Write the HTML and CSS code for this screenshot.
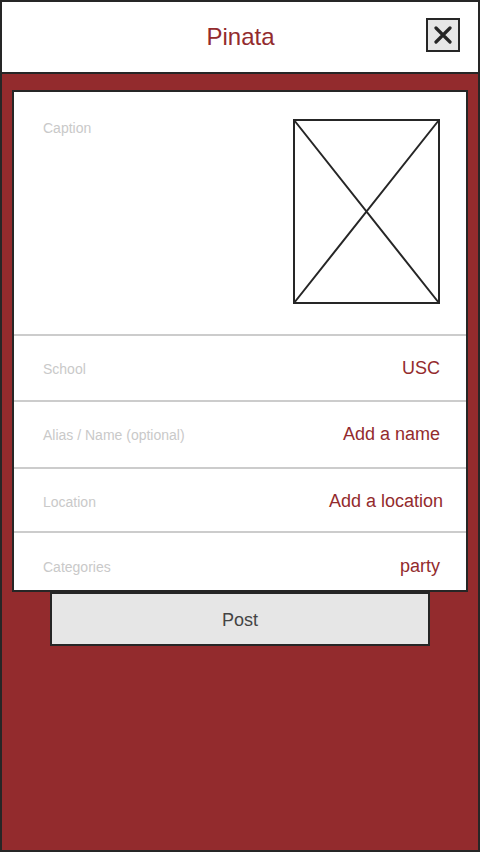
FILE: index.html
```html
<!DOCTYPE html>
<html>
<head>
<meta charset="utf-8">
<link rel="stylesheet" href="styles.css">
</head>
<body>
<div class="app">
  <header class="topbar">
    <h1 class="title">Pinata</h1>
    <button class="close" aria-label="Close">
      <svg width="18" height="18" viewBox="0 0 18 18"><path d="M2 2 L16 16 M16 2 L2 16" stroke="#262626" stroke-width="3.2" stroke-linecap="round" fill="none"/></svg>
    </button>
  </header>
  <main class="content">
    <section class="card">
      <div class="caption-area">
        <div class="caption-label">Caption</div>
        <div class="placeholder">
          <svg width="147" height="185" viewBox="0 0 147 185" preserveAspectRatio="none"><rect x="1" y="1" width="145" height="183" fill="#fff" stroke="#262626" stroke-width="2"/><path d="M1 1 L146 184 M146 1 L1 184" stroke="#262626" stroke-width="2" fill="none"/></svg>
        </div>
      </div>
      <div class="row row-school"><span class="label">School</span><span class="value">USC</span></div>
      <div class="row row-alias"><span class="label">Alias / Name (optional)</span><span class="value">Add a name</span></div>
      <div class="row row-location"><span class="label">Location</span><span class="value value-wide">Add a location</span></div>
      <div class="row row-categories"><span class="label">Categories</span><span class="value">party</span></div>
    </section>
    <button class="post">Post</button>
  </main>
</div>
</body>
</html>
```
FILE: styles.css
```css
* { box-sizing: border-box; }
html, body { margin: 0; padding: 0; }
body { font-family: "Liberation Sans", Arial, sans-serif; background: #fff; }
.app {
  width: 480px;
  height: 852px;
  border: 2px solid #262626;
  display: flex;
  flex-direction: column;
}
.topbar {
  height: 72px;
  flex: none;
  border-bottom: 2px solid #262626;
  background: #fff;
  display: flex;
  align-items: center;
  justify-content: center;
  position: relative;
}
.title {
  margin: 0;
  font-size: 24px;
  font-weight: normal;
  color: #932b2d;
  line-height: 70px;
  padding-left: 1px;
}
.close {
  position: absolute;
  left: 424px;
  top: 16px;
  width: 34px;
  height: 34px;
  border: 2px solid #262626;
  background: #e6e6e6;
  padding: 0;
  margin: 0;
  display: flex;
  align-items: center;
  justify-content: center;
}
.close svg { display: block; }
.content {
  flex: 1;
  background: #932b2d;
  padding: 16px 10px 0 10px;
  display: flex;
  flex-direction: column;
  align-items: center;
}
.card {
  width: 456px;
  border: 2px solid #262626;
  background: #fff;
}
.caption-area {
  height: 242px;
  display: flex;
  justify-content: space-between;
  padding: 27px 26px 0 29px;
}
.caption-label {
  font-size: 14px;
  color: #c9c9c9;
  line-height: 16px;
  padding-top: 1px;
}
.placeholder { width: 147px; height: 185px; }
.placeholder svg { display: block; }
.row {
  border-top: 2px solid #cccccc;
  display: flex;
  align-items: baseline;
  justify-content: space-between;
  padding: 22px 26px 0 29px;
  line-height: 20px;
}
.row-school { height: 66px; }
.row-alias { height: 67px; }
.row-location { height: 64px; }
.row-categories { height: 59px; padding-top: 23px; }
.label {
  font-size: 14px;
  color: #c9c9c9;
}
.value {
  font-size: 18px;
  color: #932b2d;
}
.value-wide { margin-right: -3px; }
.post {
  width: 380px;
  height: 54px;
  border: 2px solid #262626;
  background: #e6e6e6;
  font-family: "Liberation Sans", Arial, sans-serif;
  font-size: 18px;
  color: #444444;
  padding: 2px 0 0 0;
  margin: 0;
}
```
